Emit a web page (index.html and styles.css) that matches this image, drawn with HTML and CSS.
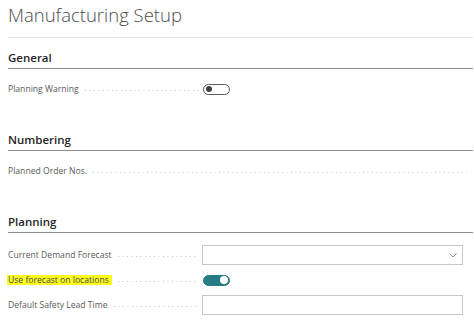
FILE: index.html
```html
<!DOCTYPE html>
<html>
<head>
<meta charset="utf-8">
<link rel="stylesheet" href="styles.css">
</head>
<body>
<div class="page">
  <h1 class="title">Manufacturing Setup</h1>

  <section class="section">
    <h2 class="section-title">General</h2>
    <div class="rows">
      <div class="row">
        <span class="label">Planning Warning</span>
        <span class="leader"></span>
        <div class="control"><span class="toggle"><span class="knob"></span></span></div>
      </div>
    </div>
  </section>

  <section class="section">
    <h2 class="section-title">Numbering</h2>
    <div class="rows">
      <div class="row row-wide">
        <span class="label">Planned Order Nos.</span>
        <span class="leader"></span>
      </div>
    </div>
  </section>

  <section class="section">
    <h2 class="section-title">Planning</h2>
    <div class="rows rows-fields">
      <div class="row">
        <span class="label">Current Demand Forecast</span>
        <span class="leader"></span>
        <div class="control">
          <div class="input select">
            <svg class="chevron" width="8" height="5" viewBox="0 0 8 5"><path d="M0.5 0.5 L4 4 L7.5 0.5" fill="none" stroke="#909090" stroke-width="1"/></svg>
          </div>
        </div>
      </div>
      <div class="row">
        <span class="label"><span class="highlight">Use forecast on locations</span></span>
        <span class="leader"></span>
        <div class="control"><span class="toggle toggle-on"><span class="knob"></span></span></div>
      </div>
      <div class="row">
        <span class="label">Default Safety Lead Time</span>
        <span class="leader"></span>
        <div class="control"><div class="input"></div></div>
      </div>
    </div>
  </section>
</div>
</body>
</html>
```

FILE: styles.css
```css
html, body {
  margin: 0;
  padding: 0;
  background: #ffffff;
}

.page {
  padding: 0 1px 0 8px;
  font-family: "Open Sans", "Noto Sans", sans-serif;
  display: flex;
  flex-direction: column;
  gap: 21px;
}

.title {
  margin: 0;
  padding-top: 3px;
  height: 34px;
  box-sizing: content-box;
  font-size: 18.5px;
  line-height: 24px;
  font-weight: 300;
  color: #4d4d4d;
  border-bottom: 1px solid #e3e3e3;
  margin-bottom: -21px;
}

.section-title {
  margin: 0;
  padding-top: 13px;
  padding-bottom: 3px;
  font-size: 11.5px;
  line-height: 14px;
  font-weight: 600;
  color: #262626;
  border-bottom: 1px solid #8c8c8c;
}

.rows {
  margin-top: 10px;
  display: flex;
  flex-direction: column;
  gap: 5px;
}

.rows-fields {
  margin-top: 12px;
}

.row {
  display: flex;
  align-items: center;
  height: 20px;
  padding-right: 10px;
}

.row-wide {
  padding-right: 3px;
}

.label {
  font-size: 8.6px;
  color: #595959;
  white-space: nowrap;
  flex: none;
}

.highlight {
  display: inline-block;
  background: #fbfb1e;
  line-height: 10px;
  margin-left: -1px;
  padding: 0 3px 0 1px;
  color: #4a4a4a;
}

.leader {
  flex: 1;
  height: 1px;
  margin: 2px 3px 0 6px;
  background-image: linear-gradient(to right, #c4c4c4 1px, transparent 1px);
  background-size: 4.5px 1px;
  background-repeat: repeat-x;
}

.control {
  width: 261px;
  flex: none;
  display: flex;
  align-items: center;
}

.toggle {
  position: relative;
  width: 27px;
  height: 11px;
  box-sizing: border-box;
  border: 1px solid #5a5a5a;
  border-radius: 6px;
  margin-left: 1px;
  background: #fff;
}

.toggle .knob {
  position: absolute;
  left: 2px;
  top: 1.5px;
  width: 6px;
  height: 6px;
  border-radius: 50%;
  background: #3f3f46;
}

.toggle-on {
  background: #287c84;
  border-color: #287c84;
}

.toggle-on .knob {
  left: auto;
  right: 1px;
  top: 0.5px;
  width: 8px;
  height: 8px;
  background: #ffffff;
}

.input {
  width: 261px;
  height: 20px;
  box-sizing: border-box;
  border: 1px solid #c6c6c6;
  background: #fff;
}

.select {
  display: flex;
  align-items: center;
  justify-content: flex-end;
  padding-right: 5px;
}

.chevron {
  display: block;
}
```
